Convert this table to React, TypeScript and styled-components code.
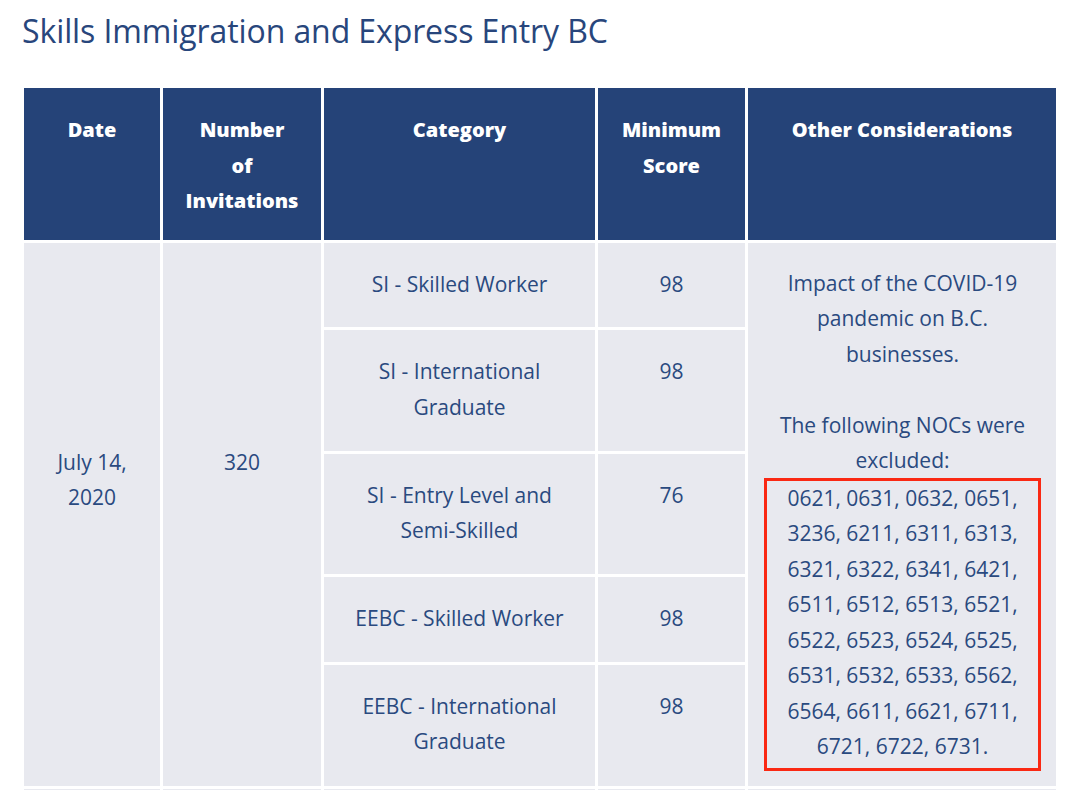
import React from "react";
import styled, { createGlobalStyle } from "styled-components";

const Global = createGlobalStyle`
  html, body { margin: 0; padding: 0; background: #ffffff; }
  body { font-family: "Open Sans", "Noto Sans", Arial, sans-serif; }
`;

const Page = styled.div`
  padding: 0 0 0 21px;
`;

const Title = styled.h1`
  margin: 11px 0 0 1px;
  font-size: 32px;
  line-height: 39px;
  font-weight: 400;
  color: #28467c;
  letter-spacing: -0.1px;
`;

const Table = styled.table`
  margin-top: 35px;
  border-collapse: separate;
  border-spacing: 3px;
  table-layout: fixed;
  width: 1038px;
  color: #2a4a7f;
  font-size: 21px;
  line-height: 35.5px;
`;

const Head = styled.th`
  background: #254378;
  color: #ffffff;
  font-weight: 800;
  font-size: 20px;
  line-height: 35.5px;
  text-align: center;
  vertical-align: top;
  padding: 24px 6px 21px;
  white-space: nowrap;
`;

const Cell = styled.td<{ $align?: "top" | "middle" }>`
  background: #e8e9ef;
  text-align: center;
  vertical-align: ${(p) => p.$align ?? "top"};
  padding: 24px 10px;
  white-space: nowrap;
`;

const SpanValue = styled.div`
  min-height: 139px;
`;

const NotesCell = styled.td`
  background: #e8e9ef;
  text-align: center;
  vertical-align: top;
  padding: 23px 15px 15px 16px;
  white-space: nowrap;
`;

const Blank = styled.div`
  height: 35.5px;
`;

const NocBox = styled.div`
  margin-top: -1px;
  border: 3px solid #fa2813;
  padding: 0 0 3px;
`;

const FillerCell = styled.td`
  background: #e8e9ef;
  height: 40px;
  padding: 0;
`;

const rows = [
  { category: ["SI - Skilled Worker"], score: "98" },
  { category: ["SI - International", "Graduate"], score: "98" },
  { category: ["SI - Entry Level and", "Semi-Skilled"], score: "76" },
  { category: ["EEBC - Skilled Worker"], score: "98" },
  { category: ["EEBC - International", "Graduate"], score: "98" },
];

const nocs = [
  "0621, 0631, 0632, 0651,",
  "3236, 6211, 6311, 6313,",
  "6321, 6322, 6341, 6421,",
  "6511, 6512, 6513, 6521,",
  "6522, 6523, 6524, 6525,",
  "6531, 6532, 6533, 6562,",
  "6564, 6611, 6621, 6711,",
  "6721, 6722, 6731.",
];

const Lines: React.FC<{ lines: string[] }> = ({ lines }) => (
  <>
    {lines.map((l, i) => (
      <React.Fragment key={i}>
        {i > 0 && <br />}
        {l}
      </React.Fragment>
    ))}
  </>
);

export default function App() {
  return (
    <>
      <Global />
      <Page>
        <Title>Skills Immigration and Express Entry BC</Title>
        <Table>
          <colgroup>
            <col style={{ width: 136 }} />
            <col style={{ width: 158 }} />
            <col style={{ width: 271 }} />
            <col style={{ width: 147 }} />
            <col style={{ width: 308 }} />
          </colgroup>
          <thead>
            <tr>
              <Head>Date</Head>
              <Head>
                <Lines lines={["Number", "of", "Invitations"]} />
              </Head>
              <Head>Category</Head>
              <Head>
                <Lines lines={["Minimum", "Score"]} />
              </Head>
              <Head>Other Considerations</Head>
            </tr>
          </thead>
          <tbody>
            {rows.map((r, i) => (
              <tr key={i}>
                {i === 0 && (
                  <>
                    <Cell $align="middle" rowSpan={rows.length}>
                      <SpanValue>
                        <Lines lines={["July 14,", "2020"]} />
                      </SpanValue>
                    </Cell>
                    <Cell $align="middle" rowSpan={rows.length}>
                      <SpanValue>320</SpanValue>
                    </Cell>
                  </>
                )}
                <Cell>
                  <Lines lines={r.category} />
                </Cell>
                <Cell>{r.score}</Cell>
                {i === 0 && (
                  <NotesCell rowSpan={rows.length}>
                    <Lines
                      lines={[
                        "Impact of the COVID-19",
                        "pandemic on B.C.",
                        "businesses.",
                      ]}
                    />
                    <Blank />
                    <Lines lines={["The following NOCs were", "excluded:"]} />
                    <NocBox>
                      <Lines lines={nocs} />
                    </NocBox>
                  </NotesCell>
                )}
              </tr>
            ))}
            <tr>
              <FillerCell />
              <FillerCell />
              <FillerCell />
              <FillerCell />
              <FillerCell />
            </tr>
          </tbody>
        </Table>
      </Page>
    </>
  );
}
